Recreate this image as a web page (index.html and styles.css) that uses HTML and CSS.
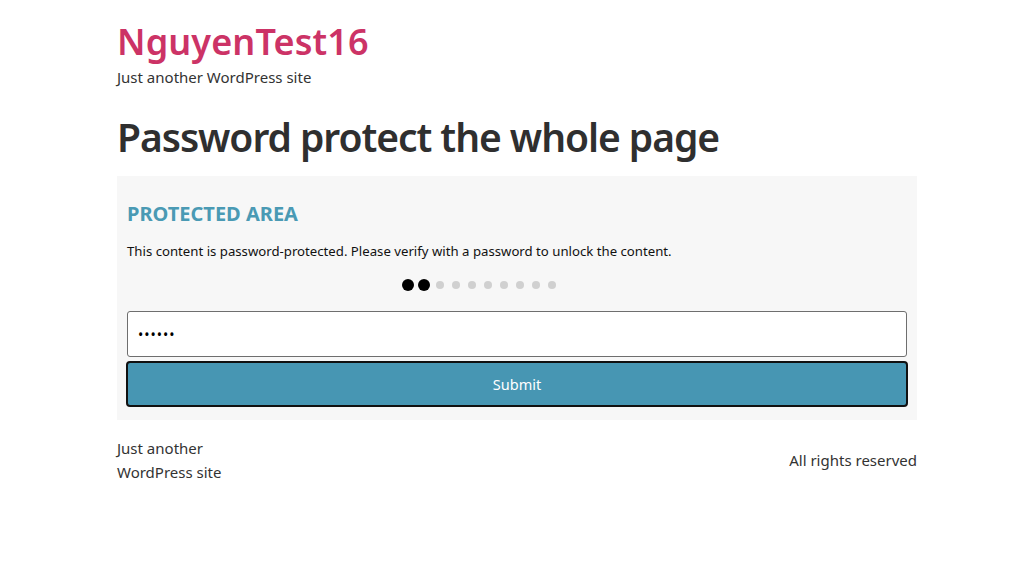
FILE: index.html
```html
<!DOCTYPE html>
<html lang="en">
<head>
<meta charset="utf-8">
<title>Password protect the whole page – NguyenTest16</title>
<link rel="stylesheet" href="styles.css">
</head>
<body>
<div class="page">
  <header class="site-header">
    <p class="site-title">NguyenTest16</p>
    <p class="site-tagline">Just another WordPress site</p>
  </header>
  <main>
    <h1 class="entry-title">Password protect the whole page</h1>
    <section class="protected">
      <h2 class="protected-title">PROTECTED AREA</h2>
      <p class="protected-text">This content is password-protected. Please verify with a password to unlock the content.</p>
      <div class="dots">
        <span class="dot on"></span><span class="dot on"></span><span class="dot"></span><span class="dot"></span><span class="dot"></span><span class="dot"></span><span class="dot"></span><span class="dot"></span><span class="dot"></span><span class="dot"></span>
      </div>
      <form class="pw-form">
        <input class="pw-input" type="password" value="123456">
        <button class="pw-submit" type="button">Submit</button>
      </form>
    </section>
  </main>
  <footer class="site-footer">
    <p class="footer-left">Just another<br>WordPress site</p>
    <p class="footer-right">All rights reserved</p>
  </footer>
</div>
</body>
</html>
```

FILE: styles.css
```css
* { box-sizing: border-box; }
html, body { margin: 0; padding: 0; background: #fff; }
body {
  font-family: "Noto Sans", "Open Sans", sans-serif;
  color: #333;
}
.page {
  width: 800px;
  margin: 0 auto;
  padding-top: 18px;
}
.site-header p { margin: 0; }
.site-title {
  font-size: 36px;
  font-weight: 600;
  line-height: 48px;
  color: #cc3366;
  letter-spacing: 0.1px;
}
.site-tagline {
  font-size: 15px;
  line-height: 20px;
  color: #333;
  margin-top: 1px !important;
}
.entry-title {
  margin: 25px 0 14px;
  font-size: 39px;
  line-height: 50px;
  font-weight: 600;
  color: #2f2f2f;
  letter-spacing: -1.05px;
}
.protected {
  background: #f7f7f7;
  padding: 23px 10px 13px;
}
.protected-title {
  margin: 0;
  font-size: 20px;
  line-height: 30px;
  font-weight: 700;
  color: #4a9ab4;
}
.protected-text {
  margin: 12px 0 0;
  font-size: 13.2px;
  line-height: 20px;
  color: #111;
}
.dots {
  display: flex;
  align-items: center;
  padding-left: 275px;
  height: 20px;
  margin-top: 14px;
}
.dot {
  width: 8px;
  height: 8px;
  border-radius: 50%;
  background: #d0d0d0;
  margin: 0 4px;
}
.dot.on {
  width: 12px;
  height: 12px;
  background: #000;
  margin: 0 2px;
}
.dots .dot:first-child { margin-left: 0; }
.pw-form {
  display: flex;
  flex-direction: column;
  gap: 4px;
  margin-top: 16px;
}
.pw-input {
  height: 46px;
  border: 1px solid #6e6e6e;
  border-radius: 3px;
  background: #fff;
  padding: 0 10px;
  font-size: 14px;
  font-family: inherit;
  color: #000;
  letter-spacing: 1px;
}
.pw-submit {
  height: 46px;
  margin: 0 -1px;
  border: 2px solid #111;
  border-radius: 4px;
  background: #4796b3;
  color: #fff;
  font-family: inherit;
  font-size: 14.5px;
  padding-bottom: 2px;
}
.site-footer {
  display: flex;
  justify-content: space-between;
  align-items: center;
  margin-top: 16px;
}
.site-footer p {
  margin: 0;
  font-size: 15px;
  line-height: 24px;
  color: #333;
}
```
